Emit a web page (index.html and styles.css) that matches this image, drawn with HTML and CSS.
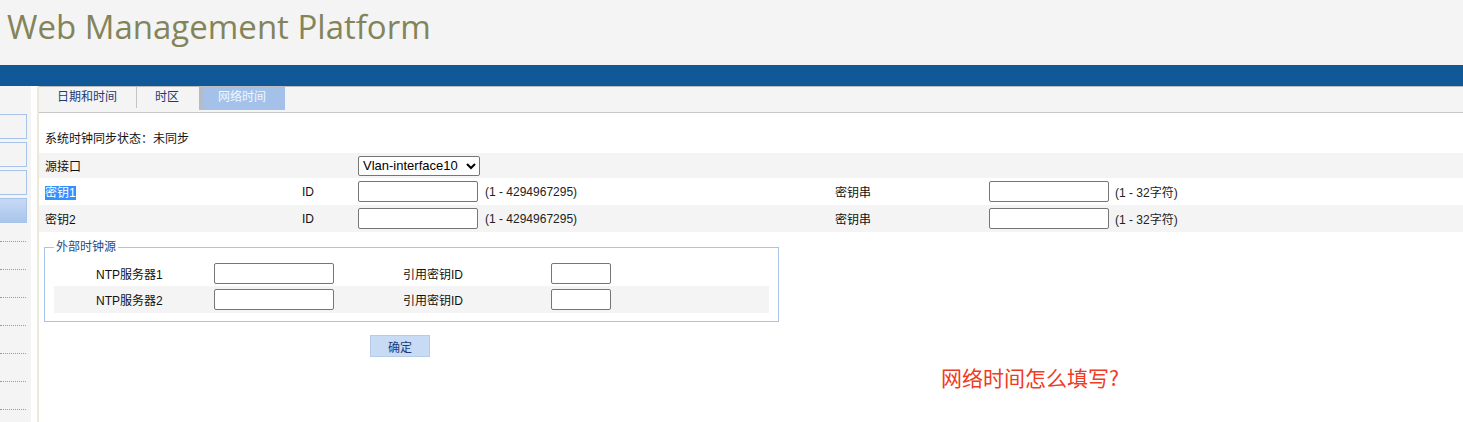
FILE: index.html
```html
<!DOCTYPE html>
<html lang="zh-CN">
<head>
<meta charset="UTF-8">
<title>Web Management Platform</title>
<link rel="stylesheet" href="styles.css">
</head>
<body>
  <div class="header">
    <h1 class="title">Web Management Platform</h1>
  </div>
  <div class="topbar"></div>
  <div class="main">
    <div class="sidebar">
      <div class="side-btn"></div>
      <div class="side-btn"></div>
      <div class="side-btn"></div>
      <div class="side-btn selected"></div>
      <div class="side-items">
        <div class="side-item"></div>
        <div class="side-item"></div>
        <div class="side-item"></div>
        <div class="side-item"></div>
        <div class="side-item"></div>
        <div class="side-item"></div>
        <div class="side-item"></div>
      </div>
    </div>
    <div class="content">
      <div class="tabs">
        <div class="tab sep">日期和时间</div>
        <div class="tab">时区</div>
        <div class="tab active">网络时间</div>
      </div>

      <div class="status">系统时钟同步状态：未同步</div>

      <table class="form">
        <colgroup>
          <col style="width: 257px">
          <col style="width: 56px">
          <col style="width: 127px">
          <col style="width: 350px">
          <col style="width: 154px">
          <col style="width: 126px">
          <col>
        </colgroup>
        <tr class="row-gray short">
          <td>源接口</td>
          <td></td>
          <td colspan="5">
            <select class="sel">
              <option>Vlan-interface10</option>
            </select>
          </td>
        </tr>
        <tr>
          <td><span class="picked">密钥1</span></td>
          <td>ID</td>
          <td><input type="text" class="txt"></td>
          <td class="hint">(1 - 4294967295)</td>
          <td>密钥串</td>
          <td><input type="text" class="txt"></td>
          <td class="hint">(1 - 32字符)</td>
        </tr>
        <tr class="row-gray">
          <td>密钥2</td>
          <td>ID</td>
          <td><input type="text" class="txt"></td>
          <td class="hint">(1 - 4294967295)</td>
          <td>密钥串</td>
          <td><input type="text" class="txt"></td>
          <td class="hint">(1 - 32字符)</td>
        </tr>
      </table>

      <fieldset class="ext">
        <legend>外部时钟源</legend>
        <table class="ntp">
          <colgroup>
            <col style="width: 154px">
            <col style="width: 132px">
            <col style="width: 205px">
            <col>
          </colgroup>
          <tr>
            <td class="ntp-label">NTP服务器1</td>
            <td><input type="text" class="txt"></td>
            <td class="key-label">引用密钥ID</td>
            <td><input type="text" class="txt small"></td>
          </tr>
          <tr class="row-gray tall">
            <td class="ntp-label">NTP服务器2</td>
            <td><input type="text" class="txt"></td>
            <td class="key-label">引用密钥ID</td>
            <td><input type="text" class="txt small"></td>
          </tr>
        </table>
      </fieldset>

      <button class="ok">确定</button>
    </div>
  </div>
  <div class="note">网络时间怎么填写?</div>
</body>
</html>
```

FILE: styles.css
```css
body {
  margin: 0;
  padding: 0;
  font-family: "Liberation Sans", "Noto Sans CJK SC", sans-serif;
  font-size: 12px;
  color: #111;
  background: #fff;
  overflow: hidden;
  height: 422px;
  position: relative;
}

.header {
  height: 65px;
  background-color: #f4f4f4;
}

.title {
  margin: 0;
  padding: 4px 0 0 7px;
  font-family: "Open Sans", sans-serif;
  font-weight: normal;
  font-size: 33px;
  line-height: 46px;
  color: #84845a;
}

.topbar {
  height: 21px;
  background-color: #115899;
}

.main {
  display: flex;
  height: 336px;
}

.sidebar {
  width: 31px;
  background-color: #f4f4f4;
  padding-top: 28px;
  box-sizing: border-box;
  flex-shrink: 0;
}

.side-btn {
  width: 36px;
  height: 23px;
  margin: 0 0 3px -11px;
  border: 1px solid #a8c4e8;
  background-color: #f4f4f4;
}

.side-btn.selected {
  background: linear-gradient(#c6daf5, #a9c5eb);
}

.side-items {
  padding-top: 15px;
}

.side-item {
  width: 26px;
  height: 27px;
  border-bottom: 1px dotted #9a9a9a;
}

.side-item:first-child {
  height: 0;
}

.content {
  flex: 1;
  margin-left: 6px;
  border-left: 2px solid #ece9d8;
}

.tabs {
  display: flex;
  height: 25px;
  background-color: #f4f4f4;
  border-top: 1px solid #bcbcbc;
  border-bottom: 1px solid #c8c8c8;
}

.tab {
  height: 23px;
  line-height: 18px;
  padding: 0 19px 0 18px;
  color: #1c3a74;
  font-family: "Noto Sans CJK SC", sans-serif;
}

.tab.sep {
  border-right: 1px solid #c4c4c4;
  height: 21px;
}

.tab.active {
  margin-left: 1px;
  padding: 0 19px 0 19px;
  background-color: #a4c2e9;
  color: #f2f6ff;
  box-shadow: inset 4px 0 0 #b4bccb;
}

.status {
  padding: 18px 0 0 6px;
  height: 22px;
  line-height: 17px;
}

.form {
  width: 100%;
  table-layout: fixed;
  border-collapse: collapse;
}

.form td {
  padding: 0 0 0 6px;
  height: 27px;
  white-space: nowrap;
}

.form tr.short td {
  height: 25px;
}

.row-gray {
  background-color: #f4f4f4;
}

.picked {
  background-color: #3390ff;
  color: #fff;
}

.hint {
  color: #222;
}

.txt {
  box-sizing: border-box;
  width: 120px;
  height: 21px;
  margin: 0;
  padding: 1px 2px;
  border: 1px solid #767676;
  border-radius: 2px;
  background: #fff;
  vertical-align: middle;
}

.txt.small {
  width: 60px;
}

.sel {
  box-sizing: border-box;
  width: 122px;
  height: 20px;
  margin: 0;
  border: 1px solid #767676;
  border-radius: 2px;
  background: #fff;
  font-family: "Liberation Sans", sans-serif;
  font-size: 13px;
  color: #000;
  vertical-align: middle;
}

.ext {
  width: 715px;
  margin: 7px 0 0 5px;
  padding: 4px 9px 8px 9px;
  border: 1px solid #a8c4e8;
}

.ext legend {
  padding: 0 2px;
  color: #2c4a80;
  line-height: 17px;
}

.ntp {
  width: 100%;
  table-layout: fixed;
  border-collapse: collapse;
}

.ntp td {
  padding: 0 0 0 6px;
  height: 26px;
  white-space: nowrap;
}

.ntp tr.tall td {
  height: 27px;
}

.ntp td.ntp-label {
  padding-left: 42px;
}

.ntp td.key-label {
  padding-left: 63px;
}

.ok {
  display: block;
  width: 60px;
  height: 22px;
  margin: 13px 0 0 331px;
  padding: 0;
  border: 1px solid #b4cbe9;
  background-color: #c8dbf4;
  color: #1c3a74;
  font-family: "Noto Sans CJK SC", sans-serif;
  font-size: 12px;
}

.note {
  position: absolute;
  left: 941px;
  top: 362px;
  font-family: "Noto Sans CJK SC", sans-serif;
  font-size: 21px;
  line-height: 30px;
  color: #f03a22;
}
```
